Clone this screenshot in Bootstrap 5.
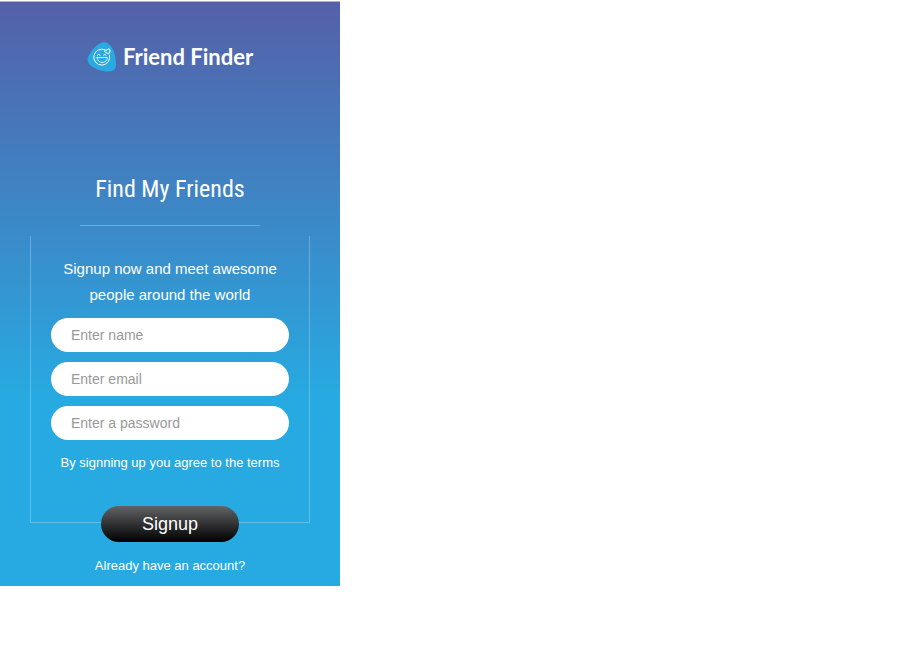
<!DOCTYPE html>
<html lang="en">
<head>
<meta charset="utf-8">
<meta name="viewport" content="width=device-width, initial-scale=1">
<title>Friend Finder</title>
<link href="https://cdn.jsdelivr.net/npm/bootstrap@5.3.0/dist/css/bootstrap.min.css" rel="stylesheet">
<style>
body { font-family: "Liberation Sans", Arial, sans-serif; background: #fff; }
.signup-panel {
  max-width: 340px;
  padding: 40px 30px 8px;
  border-top: 1px solid #a9b3cc;
  margin-top: 1px;
  background: linear-gradient(#5560a8, #27aae1 68%);
}
.brand { gap: 6px; font: 700 22px/30px Lato, sans-serif; }
.brand svg { width: 30px; height: 30px; }
.panel-title { font: 400 24px/36px "Roboto Condensed", "Liberation Sans", sans-serif; margin: 99px 0 0; }
.title-line { width: 180px; height: 1px; margin: 18px auto 10px; background: rgba(255,255,255,.28); }
.signup-box { padding: 20px 20px 0; border: 1px solid rgba(255,255,255,.25); border-top: 0; }
.intro { font-size: 15px; line-height: 26px; margin: 0 0 10px; }
.signup-box .form-control { height: 34px; padding: 6px 20px; border: 0; font-size: 14px; line-height: 20px; margin-bottom: 10px; }
.signup-box .form-control::placeholder { color: #999; }
.terms { font-size: 13px; line-height: 26px; margin: 0 0 30px; }
.btn-signup {
  width: 138px; height: 36px; padding: 0; border: 0; margin-bottom: -20px;
  font-size: 18px; line-height: 36px; color: #fff;
  background: linear-gradient(#626366, #000);
}
.btn-signup:hover { color: #fff; background: #222; }
.account-link { font-size: 13px; line-height: 24px; margin-top: 31px; }
</style>
</head>
<body>
<main class="signup-panel text-white text-center">
  <a href="#" class="brand d-flex justify-content-center align-items-center text-white text-decoration-none">
    <svg viewBox="0 0 30 30" fill="none" stroke-linecap="round" stroke-linejoin="round" aria-hidden="true">
      <path d="M13 1.5Q17-1 21 1.5C26 5 29 12 29 23Q29 29 22 29.5C14 29.5 8 27 3 23Q-1 19 1.500 14C4 9 8 4 13 1.500Z" fill="#29aae1"/>
      <g stroke="#fff" stroke-width="1">
        <path d="M18 7.800A8 8 0 1 0 22.500 13"/>
        <path d="M10 15.500H20.500Q19.500 20.500 15.200 20.500Q11 20.500 10 15.500" stroke-width=".8"/>
        <path d="M10.500 13Q11.500 11.800 13 13M16.500 13Q17.700 11.800 19 13"/>
        <path d="M17.500 9.500Q18 7.500 20 8Q21 6.500 22.500 7Q23.500 9 22.500 11Q20.500 12.500 17.500 9.500"/>
      </g>
    </svg>
    <span>Friend Finder</span>
  </a>
  <h1 class="panel-title">Find My Friends</h1>
  <div class="title-line"></div>
  <form class="signup-box">
    <p class="intro">Signup now and meet awesome people around the world</p>
    <input id="name" type="text" class="form-control rounded-pill" placeholder="Enter name" aria-label="Enter name">
    <input id="email" type="email" class="form-control rounded-pill" placeholder="Enter email" aria-label="Enter email">
    <input id="password" type="password" class="form-control rounded-pill" placeholder="Enter a password" aria-label="Enter a password">
    <p class="terms text-nowrap">By signning up you agree to the terms</p>
    <button type="submit" class="btn btn-signup rounded-pill d-block mx-auto">Signup</button>
  </form>
  <a href="#" class="account-link d-block text-white text-decoration-none">Already have an account?</a>
</main>
<script src="https://cdn.jsdelivr.net/npm/bootstrap@5.3.0/dist/js/bootstrap.bundle.min.js"></script>
</body>
</html>
